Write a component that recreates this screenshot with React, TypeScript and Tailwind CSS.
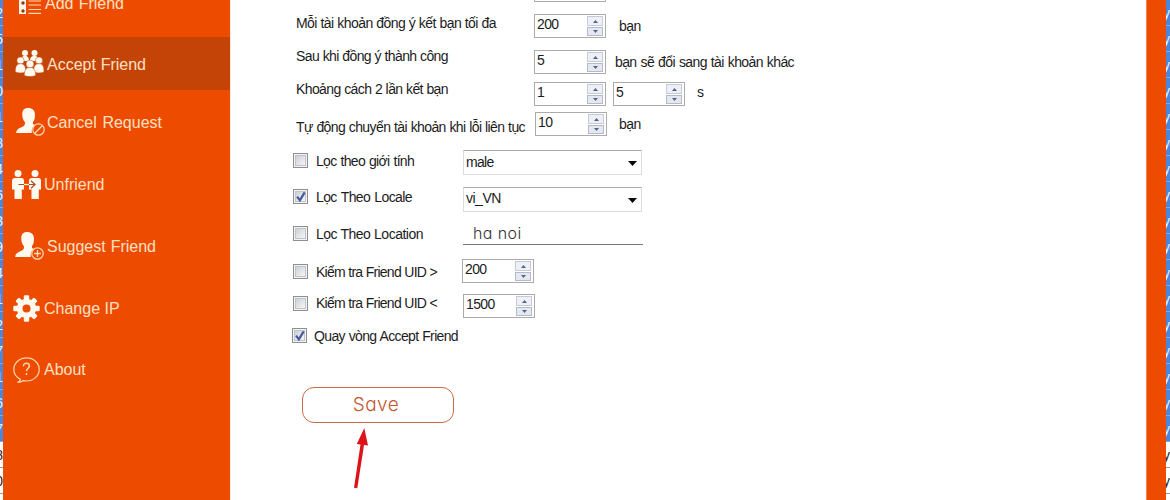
import type { ReactNode } from "react";

const LEFT_DIGITS = ["2", "5", "1", "0", "1", "8", "4", "6", "3", "9", "4", "1", "2", "7", "1", "6", "7", "8", "0"];

function GridStrip({ side }: { side: "left" | "right" }) {
  return (
    <div className={side === "left" ? "w-[3px] shrink-0 overflow-hidden" : "w-1 shrink-0 overflow-hidden"}>
      {LEFT_DIGITS.map((digit, i) => (
        <div
          key={i}
          className={
            "flex h-[26px] items-center overflow-hidden border-b text-[14px] leading-none " +
            (i < 17 ? "border-[#7fa8e6] bg-[#4a86dc] text-[#e2f6ff]" : "border-[#9a9a9a] bg-white text-[#222]") +
            (side === "left" ? " justify-end" : " justify-start")
          }
        >
          <span className={side === "left" ? "" : "-ml-[3px]"}>{side === "left" ? digit : "y"}</span>
        </div>
      ))}
    </div>
  );
}

const AddIcon = () => (
  <svg className="h-[28px] w-[22px] shrink-0" viewBox="0 0 22 28">
    <path fill="#fff6e9" d="M0 0h7v28H0z" />
    <g fill="#8b3a12"><circle cx="4" cy="17" r="1.700" /><circle cx="4" cy="25" r="1.700" /></g>
    <path d="M9.500 15h12.500M9.500 19h12.500M9.500 23.500h12.500M9.500 27.400h12.500" stroke="#ffd9b5" strokeWidth="1.200" />
  </svg>
);

const GroupIcon = () => (
  <svg className="h-[27px] w-[29px] shrink-0" viewBox="0 0 29 27" fill="#fffaf0">
    <circle cx="10" cy="3" r="3" /><circle cx="19.500" cy="3" r="3" />
    <path d="M6 11c0-3 1-5 4-5s4 1.500 4 5zM15 11c0-3.500 1-5 4.500-5 3 0 4 2 4 5z" />
    <g stroke="#c44408" strokeWidth=".5">
      <circle cx="5.500" cy="10.500" r="3.600" /><circle cx="24" cy="10.500" r="3.600" />
      <path d="M.3 22c0-5 1-8.300 5.200-8.300s5.300 3.300 5.300 8.300c-3 1.200-7.500 1.200-10.500 0zM18.500 22c0-5 1.200-8.300 5.500-8.300s5 3.300 5 8.300c-3 1.200-7.500 1.200-10.500 0z" />
      <circle cx="15" cy="14" r="3.900" />
      <path d="M9.300 25.500c0-5 1.400-8 5.700-8s5.700 3 5.700 8c-3.400 1.400-8 1.400-11.400 0z" />
    </g>
  </svg>
);

const PersonIcon = ({ plus }: { plus?: boolean }) => (
  <svg className="h-[28px] w-[29px] shrink-0" viewBox="0 0 29 28">
    <path fill="#fffaf0" d="M12 0C8 0 6 2.500 6.300 7c.1 3.500 1.200 5.600 2.700 7.200 0 3-.6 3.700-3.500 5C2 20.700.5 21.500.2 25h15.600c-.6-4 1-6.500 3-8-2-.8-2-1.400-1.800-3 1.600-2 2-4.300 2-7C19 2.500 16.500 0 12 0z" />
    <circle cx="22.500" cy="21.500" r="5.700" fill="none" stroke="#ffd8b0" strokeWidth="1.200" />
    <path d={plus ? "M22.500 18v7M19 21.500h7" : "M18.800 25.200l7.500-7.500"} stroke="#ffd8b0" strokeWidth="1.300" />
  </svg>
);

const PairIcon = () => (
  <svg className="h-[30px] w-[30px] shrink-0" viewBox="0 0 30 30">
    <g fill="#fffaf0">
      <circle cx="6" cy="3.500" r="3.500" /><circle cx="23" cy="3.500" r="3.500" />
      <path d="M3 8h6.500q2.500 0 2.500 3v8.500H9.800V29H2.500v-9.500H0V11q0-3 3-3zM20 8h6.500q2.500 0 2.500 3v8.500h-2.200V29h-7.300v-9.500H17V11q0-3 3-3z" />
    </g>
    <path d="M12 14.500h5" stroke="#fff0df" strokeWidth="1.300" />
    <path d="M6.500 14.500H12M17 14.500h5.500M19 10.800l4 3.700-4 3.700" fill="none" stroke="#a74b20" strokeWidth="1.200" />
  </svg>
);

const GearIcon = () => (
  <svg className="h-[27px] w-[27px] shrink-0" viewBox="-13.500 -13.500 27 27">
    <g fill="#fffaf0">
      {[0, 45, 90, 135].map((a) => (
        <rect key={a} x="-2.700" y="-13.200" width="5.400" height="26.400" rx="1.300" transform={`rotate(${a})`} />
      ))}
      <circle r="9.700" />
    </g>
    <circle r="4" fill="#ed4b00" />
  </svg>
);

const HelpIcon = () => (
  <svg className="h-[27px] w-[27px] shrink-0" viewBox="0 0 27 27" fill="none" stroke="#ffd5ae" strokeWidth="1.200">
    <path d="M7.500 22.300C3.500 20.300.8 16.800.8 12.500.8 6 6.500.9 13.500.9s12.700 5 12.700 11.500S20.500 24 13.500 24c-1 0-2-.1-3-.4-1.600 1.200-3.500 1.900-6 1.900 1.700-.8 2.700-1.800 3-3.200z" />
    <path d="M10.400 9.300c0-2 1.200-3.100 3-3.100s3 1.100 3 2.700c0 2.300-2.900 2.500-2.900 5.300M13.500 16v2" strokeWidth="1.500" />
  </svg>
);

type NavItem = { label: string; icon: ReactNode; row: string; text: string };

const NAV: NavItem[] = [
  { label: "Add Friend", icon: <AddIcon />, row: "h-[37px] items-start pl-4", text: "-mt-[6px] ml-1 w-[79px]" },
  { label: "Accept Friend", icon: <GroupIcon />, row: "h-[53px] items-center bg-[#c44408] pl-3", text: "ml-[3px] w-[99px] pt-0.5" },
  { label: "Cancel Request", icon: <PersonIcon />, row: "h-16 items-center pl-[13px]", text: "ml-0.5 w-[115px] pt-0.5" },
  { label: "Unfriend", icon: <PairIcon />, row: "h-[61px] items-center pl-[9px]", text: "ml-0.5 w-[60px] pt-px" },
  { label: "Suggest Friend", icon: <PersonIcon plus />, row: "h-[62px] items-center pl-3", text: "ml-[3px] w-[109px] pt-px" },
  { label: "Change IP", icon: <GearIcon />, row: "h-[62px] items-center pl-2.5", text: "ml-1 w-[74px] pt-px" },
  { label: "About", icon: <HelpIcon />, row: "h-[62px] items-center pl-2.5", text: "ml-1 w-[43px]" },
];

function Label({ className, children }: { className: string; children: string }) {
  return <span className={"block shrink-0 whitespace-nowrap leading-4 [text-align-last:justify] " + className}>{children}</span>;
}

function Spinner({ value, className = "" }: { value: string; className?: string }) {
  return (
    <div className={"flex h-6 w-[72px] shrink-0 justify-between border border-[#ababab] bg-white " + className}>
      <span className="pt-px pl-0.5 leading-4 tracking-[-0.6px]">{value}</span>
      <div className="mt-px mr-0.5 flex w-4 flex-col gap-px">
        <div className="flex h-[10px] items-center justify-center border border-[#c5cad6] bg-[#edf0f6]">
          <svg className="h-[3px] w-[5px]" viewBox="0 0 5 3"><path d="M0 3h5L2.500 0z" fill="#56628a" /></svg>
        </div>
        <div className="flex h-[9px] items-center justify-center border border-[#b4bac8] bg-[#e4e8f1]">
          <svg className="h-[3px] w-[5px]" viewBox="0 0 5 3"><path d="M0 0h5L2.500 3z" fill="#56628a" /></svg>
        </div>
      </div>
    </div>
  );
}

function Check({ checked, className }: { checked?: boolean; className: string }) {
  return (
    <div className={"size-[15px] shrink-0 border border-[#8e8f8f] bg-[#f4f4f4] p-px " + className}>
      <div className="flex size-full items-center justify-center border border-[#c0c4ca] bg-linear-to-br from-[#cdd1d6] to-[#f6f6f6]">
        {checked && (
          <svg className="size-[10px] shrink-0" viewBox="0 0 9 9" fill="none" stroke="#465a9c" strokeWidth="2">
            <path d="M1 4.200l2.500 3.300L7.800.3" />
          </svg>
        )}
      </div>
    </div>
  );
}

function Select({ value, text, className }: { value: string; text: string; className: string }) {
  return (
    <div className={"flex h-[25px] w-[179px] shrink-0 justify-between border border-[#dcdcdc] border-t-[#ababab] pr-1 pl-0.5 " + className}>
      <Label className={text}>{value}</Label>
      <svg className="mt-[10px] h-[5px] w-[9px]" viewBox="0 0 9 5"><path d="M0 0h9L4.500 5z" fill="#080808" /></svg>
    </div>
  );
}

export default function App() {
  return (
    <div className="flex h-[500px] w-[1170px] overflow-hidden bg-white font-['Liberation_Sans',Arial,sans-serif]">
      <GridStrip side="left" />
      <nav className="w-[227px] shrink-0 bg-[#ed4b00] text-[16px] text-[#ffe0c2]">
        {NAV.map((item) => (
          <div key={item.label} className={"flex " + item.row}>
            <div className={item.label === "Add Friend" ? "-mt-[14px] flex" : "flex"}>{item.icon}</div>
            <span className={"block whitespace-nowrap leading-5 [text-align-last:justify] " + item.text}>{item.label}</span>
          </div>
        ))}
      </nav>

      <main className="flex h-[500px] min-w-0 grow flex-col overflow-hidden border-l border-[#ffe9d8] text-[14px] tracking-[-0.5px] text-[#1c1c1c]">
        <div className="flex h-2 shrink-0 items-start pl-[303px]"><Spinner value="" className="-mt-[22px]" /></div>
        <div className="flex h-9 shrink-0 items-start pl-[65px]">
          <Label className="mt-[7px] w-[200px] tracking-[-0.55px]">Mỗi tài khoản đồng ý kết bạn tối đa</Label>
          <Spinner value="200" className="mt-1.5 ml-[38px]" />
          <Label className="mt-2.5 ml-[13px] w-[23px]">bạn</Label>
        </div>
        <div className="flex h-[34px] shrink-0 items-start pl-[65px]">
          <Label className="mt-1 w-[152px] tracking-[-0.6px]">Sau khi đồng ý thành công</Label>
          <Spinner value="5" className="mt-1.5 ml-[86px]" />
          <Label className="mt-2.5 ml-[9px] w-[179px] tracking-[-0.6px]">bạn sẽ đổi sang tài khoản khác</Label>
        </div>
        <div className="flex h-[31px] shrink-0 items-start pl-[65px]">
          <Label className="mt-[3px] w-[152px] tracking-[-0.6px]">Khoảng cách 2 lần kết bạn</Label>
          <Spinner value="1" className="mt-1 ml-[86px]" />
          <Spinner value="5" className="mt-1 ml-[7px]" />
          <Label className="mt-1.5 ml-3 w-[7px]">s</Label>
        </div>
        <div className="flex h-[35px] shrink-0 items-start pl-[65px]">
          <Label className="mt-2.5 w-[229px] tracking-[-0.6px]">Tự động chuyển tài khoản khi lỗi liên tục</Label>
          <Spinner value="10" className="mt-[3px] ml-2.5" />
          <Label className="mt-[7px] ml-3 w-[23px]">bạn</Label>
        </div>
        <div className="flex h-9 shrink-0 items-start pl-[62px]">
          <Check className="mt-[9px]" />
          <Label className="mt-[9px] ml-2 w-[98px] tracking-[-0.7px]">Lọc theo giới tính</Label>
          <Select value="male" text="mt-[3px] w-[27px] tracking-[-0.7px]" className="mt-1.5 ml-[49px]" />
        </div>
        <div className="flex h-9 shrink-0 items-start pl-[62px]">
          <Check checked className="mt-[9px]" />
          <Label className="mt-[9px] ml-2 w-[96px] tracking-[-0.6px]">Lọc Theo Locale</Label>
          <Select value="vi_VN" text="mt-0.5 w-[35px]" className="mt-[7px] ml-[51px]" />
        </div>
        <div className="flex h-9 shrink-0 items-start pl-[62px]">
          <Check className="mt-2.5" />
          <Label className="mt-2.5 ml-2 w-[107px]">Lọc Theo Location</Label>
          <div className="mt-[7px] ml-10 h-[22px] w-[180px] border-b border-[#777] pl-2.5 font-['Inter',sans-serif] text-[16px] font-light leading-[21px] tracking-[0.4px] text-[#333] [font-feature-settings:'cv11']">ha noi</div>
        </div>
        <div className="flex h-9 shrink-0 items-start pl-[62px]">
          <Check className="mt-3" />
          <Label className="mt-3 ml-2 w-[121px] tracking-[-0.75px]">{"Kiểm tra Friend UID >"}</Label>
          <Spinner value="200" className="mt-[7px] ml-[25px]" />
        </div>
        <div className="flex h-8 shrink-0 items-start pl-[62px]">
          <Check className="mt-2" />
          <Label className="mt-[7px] ml-2 w-[121px] tracking-[-0.75px]">{"Kiểm tra Friend UID <"}</Label>
          <Spinner value="1500" className="mt-1.5 ml-[26px]" />
        </div>
        <div className="flex h-[67px] shrink-0 items-start pl-[61px]">
          <Check checked className="mt-2" />
          <Label className="mt-2 ml-[7px] w-[144px] tracking-[-0.65px]">Quay vòng Accept Friend</Label>
        </div>
        <button className="ml-[71px] flex h-9 w-[152px] shrink-0 items-center justify-center rounded-[12px] border border-[#c96b42] pr-1 font-['Inter',sans-serif] text-[19px] font-light tracking-[0.5px] text-[#bd582f] [font-feature-settings:'cv11']">
          Save
        </button>
        <svg className="mt-1 ml-[121px] h-[63px] w-[18px] shrink-0" viewBox="0 0 18 63">
          <path d="M12.300 1l3.700 17.500-4-.5L5.300 61.300 2 60.700l6.500-43.200-3.700-.6z" fill="#dc1419" />
        </svg>
      </main>

      <div className="w-5 shrink-0 border-l border-[#f08a50] bg-[#ed4b00]" />
      <GridStrip side="right" />
    </div>
  );
}
